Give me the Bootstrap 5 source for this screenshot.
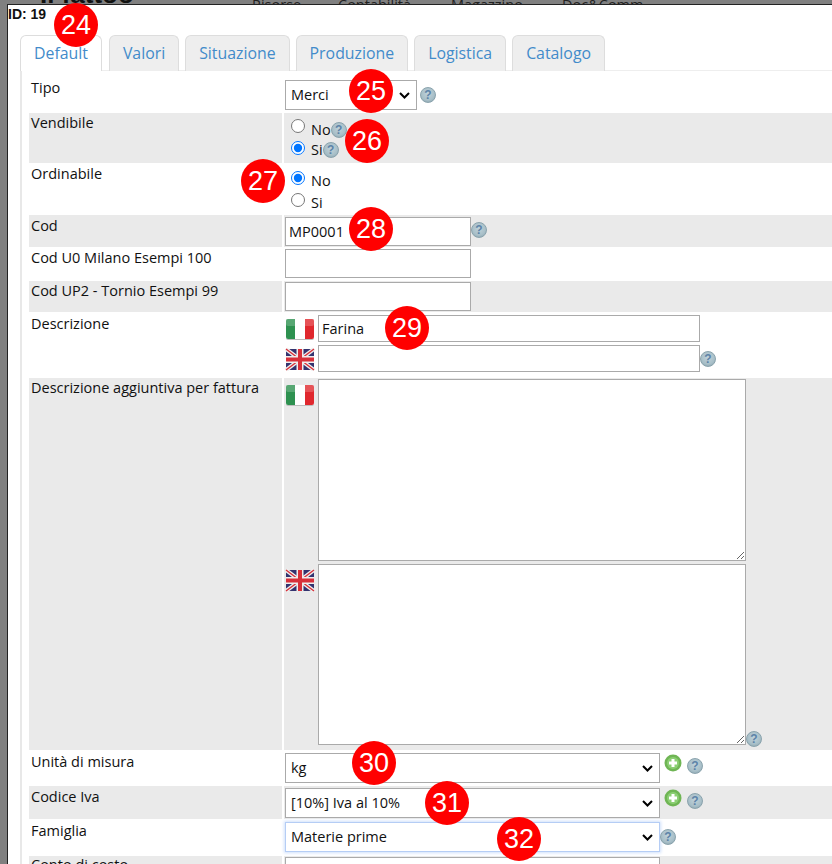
<!DOCTYPE html>
<html lang="it">
<head>
<meta charset="utf-8">
<title>Articolo</title>
<link rel="stylesheet" href="https://cdn.jsdelivr.net/npm/bootstrap@5.3.0/dist/css/bootstrap.min.css">
<style>
html,body{height:864px;overflow:hidden}
body{background:#808080;font-family:"Open Sans","Noto Sans",sans-serif;font-size:14.5px;color:#111;position:relative}
.behind{height:4px;overflow:hidden;display:flex;align-items:flex-end;padding-left:40px;color:#222;line-height:1}
.behind b{font-size:26px;width:212px;flex:none;margin-bottom:-3px;color:#111;font-family:"Liberation Sans",sans-serif}
.behind span{font-size:14.5px;margin-bottom:-8px;flex:none}
.behind .m1{width:86px}.behind .m2{width:113px}.behind .m3{width:111px}
.sheet{margin-left:7px;background:#fff;border-top:1px solid #222;border-left:1px solid #222;height:860px;overflow:hidden}
.idline{font:700 14px/16px "Liberation Sans",sans-serif;color:#111;height:30px;padding-top:1px}
.nav-tabs.tabbar{margin-left:12px;gap:6px;border-bottom:1px solid #eee;height:36px;flex-wrap:nowrap}
.tabbar .nav-link{font-size:15.85px;line-height:20px;padding:7px 13px 9px;color:#428bca;background:#eee;border:1px solid #ddd;border-bottom:0;border-radius:6px 6px 0 0;margin:0;height:36px}
.tabbar .nav-link.active{background:#fff;color:#428bca;border-color:#ddd;margin-right:1px}
.rows{margin-left:12px;padding-left:7px;border-left:2px solid #e8e8e8}
.frow{display:grid;grid-template-columns:253px 1fr;grid-template-rows:100%;column-gap:2px}
.frow.band>div{background:#eaeaea}
.lab{padding-left:2px;line-height:18px;color:#111}
.t1{padding-top:1px}.t2{padding-top:2px}.t3{padding-top:3px}.t8{padding-top:8px}
.val{padding-left:1px;display:flex;align-items:flex-start}
.h42{height:42px}.h50{height:50px}.h52{height:52px}.h32{height:32px}.h34{height:34px}.h31{height:31px}.h66{height:66px}.h372{height:372px}.h36{height:36px}.h33{height:33px}.h37{height:37px}
.form-control.fld,.form-select.fld{border:1px solid #aaa;border-radius:0;font-size:14.5px;line-height:18px;padding:3px;height:30px;color:#111;box-shadow:none;min-height:0}
.form-select.fld{padding:3px 22px 3px 5px;background-image:url("data:image/svg+xml,%3csvg xmlns='http://www.w3.org/2000/svg' viewBox='0 0 11 7'%3e%3cpath fill='none' stroke='%23000' stroke-width='2' d='M1 1l4.5 4.5L10 1'/%3e%3c/svg%3e");background-size:11px 7px;background-position:right 6px center}
.form-select.fld.sel{border-color:#b5cdf5;box-shadow:0 0 3px 1px #cfe0fb}
.w132{width:132px}.w186{width:186px}.w375{width:375px}.w382{width:382px}.w428{width:428px}
.form-control.fld.tall1{height:182px}.form-control.fld.tall2{height:181px}
.form-control.fld.short{height:27px}
.form-control.fld.mid{height:29px}
textarea.form-control.fld{resize:both;display:block}
.hlp{width:16px;height:16px;border-radius:50%;display:inline-flex;align-items:center;justify-content:center;flex:none;background:radial-gradient(circle at 50% 40%,#c0d2da 0,#a8bfc8 60%,#7f9aa5 100%);color:#5d83a8;font:700 12px/1 "Liberation Sans",sans-serif;border:1px solid #8aa3ad}
.plus{width:18px;height:18px;flex:none;margin-top:1px}
.flag{width:30px;height:24px;flex:none;display:block}
.gapf{gap:3px}
.radgrp{padding-left:7px;padding-top:6px}
.radgrp.low{padding-top:8px}
.rad{display:flex;align-items:flex-start;line-height:18px;height:24px}
.low .rad{height:23px}
.rad input{width:14px;height:14px;margin:0 6px 0 0;accent-color:#0075ff;flex:none}
.rad .tx{margin-top:2px}
.rad.next .tx{margin-top:0}
.low .rad .tx{margin-top:1px}
.rad .hlp{margin-top:3px}
.rad.next .hlp{margin-top:1px}
.num{position:absolute;width:44px;height:44px;border-radius:50%;background:#f00;color:#fff;font:400 27px/44px "Liberation Sans",sans-serif;text-align:center;z-index:5}
.v9{margin-top:9px}.v16{margin-top:16px;margin-left:3px}
.c5{margin-top:5px}
.mb3{margin-bottom:3px}
.hb{margin-bottom:-2px;margin-left:-3px}
.hd{margin-left:-3px}
.h6x{margin-top:5px;margin-left:5px}
.h7x{margin-top:7px}
.n24{left:54px;top:3px}.n25{left:349px;top:69px}.n26{left:345px;top:119px}.n27{left:241px;top:159px}.n28{left:349px;top:207px}.n29{left:385px;top:306px}.n30{left:352px;top:741px}.n31{left:425px;top:781px}.n32{left:497px;top:817px}
</style>
</head>
<body>
<div class="behind"><b>Il fattoo</b><span class="m1">Risorse</span><span class="m2">Contabilità</span><span class="m3">Magazzino</span><span>Doc&amp;Comm</span></div>
<div class="sheet">
  <div class="idline">ID: 19</div>
  <ul class="nav nav-tabs tabbar">
    <li class="nav-item"><a class="nav-link active" href="#">Default</a></li>
    <li class="nav-item"><a class="nav-link" href="#">Valori</a></li>
    <li class="nav-item"><a class="nav-link" href="#">Situazione</a></li>
    <li class="nav-item"><a class="nav-link" href="#">Produzione</a></li>
    <li class="nav-item"><a class="nav-link" href="#">Logistica</a></li>
    <li class="nav-item"><a class="nav-link" href="#">Catalogo</a></li>
  </ul>
  <div class="rows">
    <div class="frow h42">
      <div class="lab t8">Tipo</div>
      <div class="val"><select class="form-select fld w132 v9"><option>Merci</option></select><span class="hlp v16">?</span></div>
    </div>
    <div class="frow h50 band">
      <div class="lab t1">Vendibile</div>
      <div class="val flex-column radgrp">
        <div class="rad"><input type="radio" name="v"><span class="tx">No</span><span class="hlp">?</span></div>
        <div class="rad next"><input type="radio" name="v" checked><span class="tx">Si</span><span class="hlp">?</span></div>
      </div>
    </div>
    <div class="frow h52">
      <div class="lab t2">Ordinabile</div>
      <div class="val flex-column radgrp low">
        <div class="rad"><input type="radio" name="o" checked><span class="tx">No</span></div>
        <div class="rad"><input type="radio" name="o"><span class="tx">Si</span></div>
      </div>
    </div>
    <div class="frow h32 band">
      <div class="lab t2">Cod</div>
      <div class="val t2"><input class="form-control fld mid w186" value="MP0001"><span class="hlp c5">?</span></div>
    </div>
    <div class="frow h34">
      <div class="lab t2">Cod U0 Milano Esempi 100</div>
      <div class="val t2"><input class="form-control fld mid w186"></div>
    </div>
    <div class="frow h31 band">
      <div class="lab t1">Cod UP2 - Tornio Esempi 99</div>
      <div class="val t1"><input class="form-control fld mid w186"></div>
    </div>
    <div class="frow h66">
      <div class="lab t3">Descrizione</div>
      <div class="val flex-column gapf t3">
        <div class="d-flex gapf align-items-center">
          <svg class="flag" viewBox="0 0 30 24"><rect x="1" y="2" width="28" height="21" rx="2" fill="#bdbdbd"/><rect x="1" y="2" width="28" height="20" rx="2" fill="#fff"/><path d="M1 4a2 2 0 0 1 2-2h7v20H3a2 2 0 0 1-2-2z" fill="#2e9150"/><path d="M29 4a2 2 0 0 0-2-2h-7v20h7a2 2 0 0 0 2-2z" fill="#e0282e"/><rect x="1" y="2" width="28" height="7" rx="2" fill="#fff" opacity=".2"/></svg>
          <input class="form-control fld short w382" value="Farina">
        </div>
        <div class="d-flex gapf align-items-center">
          <svg class="flag" viewBox="0 0 30 24"><rect x="1" y="2" width="28" height="21" rx="2" fill="#33336f"/><path d="M1 2 29 23M29 2 1 23" stroke="#eee" stroke-width="4"/><path d="M1 2 29 23M29 2 1 23" stroke="#d8303a" stroke-width="1.4"/><path d="M15 2V23M1 12.500H29" stroke="#eee" stroke-width="7"/><path d="M15 2V23M1 12.500H29" stroke="#d8303a" stroke-width="4"/></svg>
          <input class="form-control fld short w382"><span class="hlp hd">?</span>
        </div>
      </div>
    </div>
    <div class="frow h372 band">
      <div class="lab t1">Descrizione aggiuntiva per fattura</div>
      <div class="val flex-column t1">
        <div class="d-flex gapf align-items-start mb3">
          <svg class="flag mt-1" viewBox="0 0 30 24"><rect x="1" y="2" width="28" height="21" rx="2" fill="#bdbdbd"/><rect x="1" y="2" width="28" height="20" rx="2" fill="#fff"/><path d="M1 4a2 2 0 0 1 2-2h7v20H3a2 2 0 0 1-2-2z" fill="#2e9150"/><path d="M29 4a2 2 0 0 0-2-2h-7v20h7a2 2 0 0 0 2-2z" fill="#e0282e"/><rect x="1" y="2" width="28" height="7" rx="2" fill="#fff" opacity=".2"/></svg>
          <textarea class="form-control fld tall1 w428"></textarea>
        </div>
        <div class="d-flex gapf align-items-start">
          <svg class="flag mt-1" viewBox="0 0 30 24"><rect x="1" y="2" width="28" height="21" rx="2" fill="#33336f"/><path d="M1 2 29 23M29 2 1 23" stroke="#eee" stroke-width="4"/><path d="M1 2 29 23M29 2 1 23" stroke="#d8303a" stroke-width="1.4"/><path d="M15 2V23M1 12.500H29" stroke="#eee" stroke-width="7"/><path d="M15 2V23M1 12.500H29" stroke="#d8303a" stroke-width="4"/></svg>
          <textarea class="form-control fld tall2 w428"></textarea><span class="hlp align-self-end hb">?</span>
        </div>
      </div>
    </div>
    <div class="frow h36">
      <div class="lab t3">Unità di misura</div>
      <div class="val t3"><select class="form-select fld w375"><option>kg</option></select>
        <svg class="plus ms-1" viewBox="0 0 18 18"><circle cx="9" cy="9" r="8.500" fill="#6fb554"/><circle cx="9" cy="9" r="6" fill="#8ccf74"/><path d="M9 5v8M5 9h8" stroke="#fff" stroke-width="3"/></svg>
        <span class="hlp h6x">?</span></div>
    </div>
    <div class="frow h33 band">
      <div class="lab t2">Codice Iva</div>
      <div class="val t2"><select class="form-select fld w375"><option>[10%] Iva al 10%</option></select>
        <svg class="plus ms-1" viewBox="0 0 18 18"><circle cx="9" cy="9" r="8.500" fill="#6fb554"/><circle cx="9" cy="9" r="6" fill="#8ccf74"/><path d="M9 5v8M5 9h8" stroke="#fff" stroke-width="3"/></svg>
        <span class="hlp h6x">?</span></div>
    </div>
    <div class="frow h37">
      <div class="lab t3">Famiglia</div>
      <div class="val t3"><select class="form-select fld sel w375"><option>Materie prime</option></select><span class="hlp h7x">?</span></div>
    </div>
    <div class="frow h36 band">
      <div class="lab">Conto di costo</div>
      <div class="val t1"><select class="form-select fld w375"><option></option></select></div>
    </div>
  </div>
</div>
<div class="num n24">24</div>
<div class="num n25">25</div>
<div class="num n26">26</div>
<div class="num n27">27</div>
<div class="num n28">28</div>
<div class="num n29">29</div>
<div class="num n30">30</div>
<div class="num n31">31</div>
<div class="num n32">32</div>
</body>
</html>
